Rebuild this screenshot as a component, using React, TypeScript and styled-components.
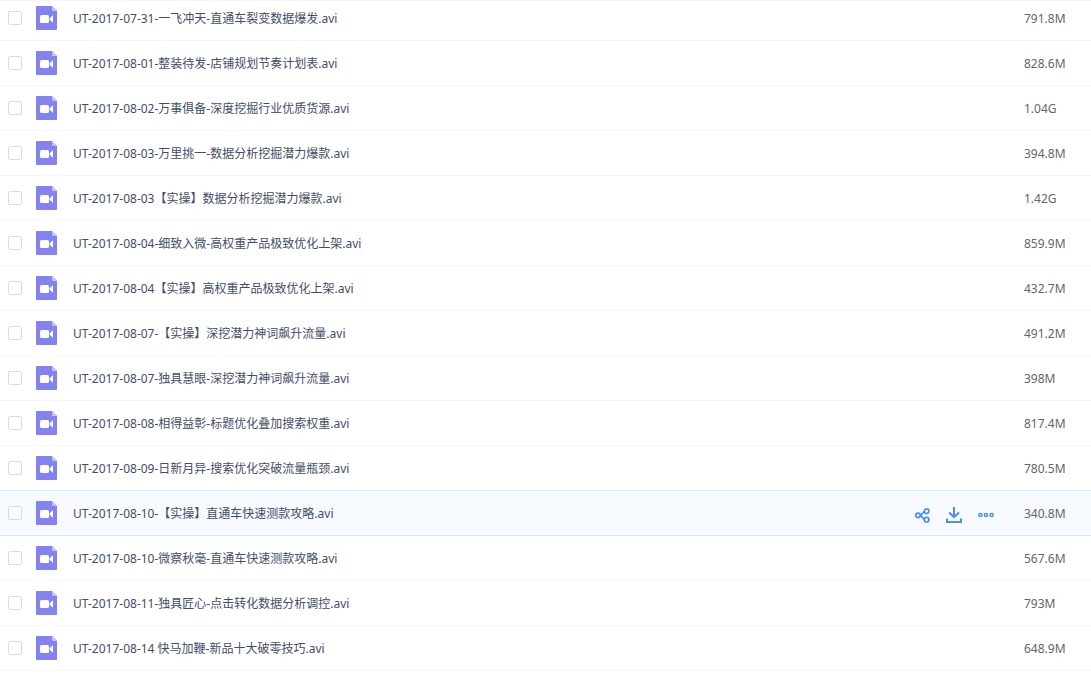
import React from "react";
import styled, { createGlobalStyle } from "styled-components";

const GlobalStyle = createGlobalStyle`
  body {
    margin: 0;
    background: #ffffff;
    font-family: "Noto Sans", "Noto Sans CJK SC", sans-serif;
    font-size: 12px;
    line-height: 16px;
    color: #424e67;
  }
`;

const Viewport = styled.main`
  border-top: 1px solid #f2f6fd;
  overflow: hidden;
`;

const FileTable = styled.table`
  width: 100%;
  margin-top: -5px;
  border-spacing: 0;
  table-layout: fixed;
`;

const Column = styled.col<{ $width?: number }>`
  width: ${({ $width }) => ($width ? `${$width}px` : "auto")};
`;

const Cell = styled.td`
  box-sizing: border-box;
  height: 45px;
  padding: 0;
  border-bottom: 1px solid #f2f6fd;
  vertical-align: middle;
  white-space: nowrap;
`;

const Row = styled.tr<{ $active: boolean }>`
  background: ${({ $active }) => ($active ? "#f7faff" : "#ffffff")};

  &[aria-selected="true"] ${Cell}, &:has(+ [aria-selected="true"]) ${Cell} {
    border-bottom-color: #d9e8fb;
  }
`;

const CheckCell = styled(Cell)`
  padding-left: 8px;
`;

const TextCell = styled(Cell)`
  padding-top: 2px;
`;

const SizeCell = styled(TextCell)`
  color: #666666;
`;

const Checkbox = styled.input`
  appearance: none;
  display: block;
  box-sizing: border-box;
  width: 14px;
  height: 14px;
  margin: 0;
  border: 1px solid #d5dce5;
  border-radius: 2px;
  background: #ffffff;

  &:checked {
    background: #4a90e8;
  }

  ${Row}[aria-selected="true"] & {
    background: #f9fbff;
  }
`;

const FileIcon = styled.svg`
  display: block;
  width: 21px;
  height: 24px;
`;

const FileName = styled.label`
  cursor: pointer;
`;

const Actions = styled.div`
  display: flex;
  justify-content: flex-start;
  gap: 16px;
  padding-top: 4px;
`;

const ActionButton = styled.button`
  display: block;
  width: 16px;
  height: 16px;
  padding: 0;
  border: 0;
  background: none;
  color: #4a90e8;
  cursor: pointer;

  svg {
    display: block;
    width: 16px;
    height: 16px;
    fill: none;
    stroke: currentColor;
  }
`;

const VideoFileIcon = () => (
  <FileIcon viewBox="0 0 21 24" aria-hidden="true">
    <path d="M1 0H16l5 5v18a1 1 0 0 1-1 1H1a1 1 0 0 1-1-1V1a1 1 0 0 1 1-1z" fill="#8283f0" />
    <path d="M16 0l5 5h-4a1 1 0 0 1-1-1z" fill="#c3c3fa" />
    <rect x="4" y="9" width="9" height="8" rx="1.5" fill="#ffffff" />
    <path d="M13.600 12.300L17 9.300v7.400l-3.400-3z" fill="#ffffff" />
  </FileIcon>
);

const ShareIcon = () => (
  <svg viewBox="0 0 16 16" strokeWidth="1.7" aria-hidden="true">
    <circle cx="4" cy="8.400" r="2.200" />
    <circle cx="12.600" cy="4.200" r="2.300" />
    <circle cx="12.600" cy="12.700" r="2.300" />
    <path d="M6.200 8.400C8 8.200 8.500 5.200 10.300 4.700M6.200 8.400C8 8.600 8.500 11.700 10.300 12.200" />
  </svg>
);

const DownloadIcon = () => (
  <svg viewBox="0 0 16 16" strokeWidth="2" aria-hidden="true">
    <path d="M8 0v10M3 5.500L8 10.200l5-4.700M1 11.500V15h14v-3.500" />
  </svg>
);

const MoreIcon = () => (
  <svg viewBox="0 0 16 16" strokeWidth="1.500" aria-hidden="true">
    <circle cx="2.400" cy="8" r="1.600" />
    <circle cx="8" cy="8" r="1.600" />
    <circle cx="13.600" cy="8" r="1.600" />
  </svg>
);

interface FileEntry {
  name: string;
  size: string;
  active?: boolean;
}

const files: FileEntry[] = [
  { name: "UT-2017-07-31-一飞冲天-直通车裂变数据爆发.avi", size: "791.8M" },
  { name: "UT-2017-08-01-整装待发-店铺规划节奏计划表.avi", size: "828.6M" },
  { name: "UT-2017-08-02-万事俱备-深度挖掘行业优质货源.avi", size: "1.04G" },
  { name: "UT-2017-08-03-万里挑一-数据分析挖掘潜力爆款.avi", size: "394.8M" },
  { name: "UT-2017-08-03【实操】数据分析挖掘潜力爆款.avi", size: "1.42G" },
  { name: "UT-2017-08-04-细致入微-高权重产品极致优化上架.avi", size: "859.9M" },
  { name: "UT-2017-08-04【实操】高权重产品极致优化上架.avi", size: "432.7M" },
  { name: "UT-2017-08-07-【实操】深挖潜力神词飙升流量.avi", size: "491.2M" },
  { name: "UT-2017-08-07-独具慧眼-深挖潜力神词飙升流量.avi", size: "398M" },
  { name: "UT-2017-08-08-相得益彰-标题优化叠加搜索权重.avi", size: "817.4M" },
  { name: "UT-2017-08-09-日新月异-搜索优化突破流量瓶颈.avi", size: "780.5M" },
  { name: "UT-2017-08-10-【实操】直通车快速测款攻略.avi", size: "340.8M", active: true },
  { name: "UT-2017-08-10-微察秋毫-直通车快速测款攻略.avi", size: "567.6M" },
  { name: "UT-2017-08-11-独具匠心-点击转化数据分析调控.avi", size: "793M" },
  { name: "UT-2017-08-14 快马加鞭-新品十大破零技巧.avi", size: "648.9M" },
];

const FileRow = ({ file, id }: { file: FileEntry; id: string }) => (
  <Row $active={!!file.active} aria-selected={!!file.active}>
    <CheckCell>
      <Checkbox type="checkbox" id={id} />
    </CheckCell>
    <Cell>
      <VideoFileIcon />
    </Cell>
    <TextCell>
      <FileName htmlFor={id}>{file.name}</FileName>
    </TextCell>
    <Cell>
      {file.active && (
        <Actions>
          <ActionButton type="button" aria-label="分享">
            <ShareIcon />
          </ActionButton>
          <ActionButton type="button" aria-label="下载">
            <DownloadIcon />
          </ActionButton>
          <ActionButton type="button" aria-label="更多">
            <MoreIcon />
          </ActionButton>
        </Actions>
      )}
    </Cell>
    <SizeCell>{file.size}</SizeCell>
  </Row>
);

export default function App() {
  return (
    <>
      <GlobalStyle />
      <Viewport>
        <FileTable>
          <colgroup>
            <Column $width={36} />
            <Column $width={37} />
            <Column />
            <Column $width={110} />
            <Column $width={67} />
          </colgroup>
          <tbody>
            {files.map((file, index) => (
              <FileRow key={file.name} file={file} id={`file-${index}`} />
            ))}
          </tbody>
        </FileTable>
      </Viewport>
    </>
  );
}
